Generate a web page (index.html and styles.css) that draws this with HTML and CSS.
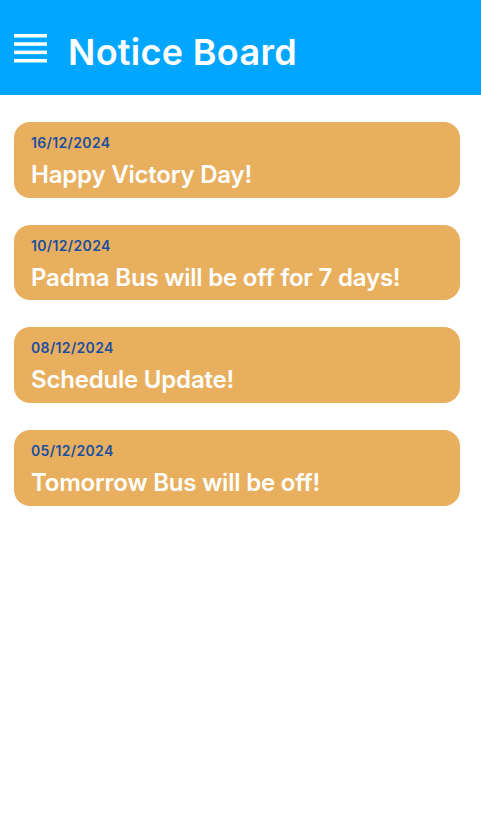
FILE: index.html
```html
<!DOCTYPE html>
<html>
<head>
<meta charset="utf-8">
<link rel="stylesheet" href="styles.css">
</head>
<body>
<header class="appbar">
  <svg class="menu" width="33" height="29" viewBox="0 0 33 29">
    <rect x="0" y="0" width="33" height="3.5" fill="#fff"/>
    <rect x="0" y="8.3" width="33" height="3.5" fill="#fff"/>
    <rect x="0" y="16.6" width="33" height="3.5" fill="#fff"/>
    <rect x="0" y="25" width="33" height="3.5" fill="#fff"/>
  </svg>
  <h1 class="title">Notice Board</h1>
</header>
<main class="list">
  <div class="card"><div class="date">16/12/2024</div><div class="text">Happy Victory Day!</div></div>
  <div class="card"><div class="date">10/12/2024</div><div class="text">Padma Bus will be off for 7 days!</div></div>
  <div class="card"><div class="date">08/12/2024</div><div class="text">Schedule Update!</div></div>
  <div class="card"><div class="date">05/12/2024</div><div class="text">Tomorrow Bus will be off!</div></div>
</main>
</body>
</html>
```
FILE: styles.css
```css
* { box-sizing: border-box; }
body { margin: 0; font-family: "Inter", "Open Sans", sans-serif; background: #fff; }
.appbar {
  height: 95px;
  background: #00A6FF;
  display: flex;
  align-items: center;
  padding-left: 14px;
  padding-top: 2px;
}
.menu { display: block; }
.title {
  margin: 6px 0 0 21px;
  color: #fff;
  font-size: 36px;
  font-weight: 600;
  letter-spacing: 0.3px;
}
.list {
  display: flex;
  flex-direction: column;
  gap: 27px;
  padding: 27px 21px 0 14px;
}
.card {
  background: #E8AF5E;
  border-radius: 16px;
  height: 75.7px;
  padding: 12px 17px 0;
}
.date {
  color: #1A4EA0;
  font-size: 14px;
  font-weight: 600;
  line-height: 18px;
  letter-spacing: 0.35px;
}
.text {
  color: #fff;
  font-size: 24px;
  font-weight: 600;
  line-height: 30px;
  margin-top: 8px;
  letter-spacing: -0.2px;
}
```
